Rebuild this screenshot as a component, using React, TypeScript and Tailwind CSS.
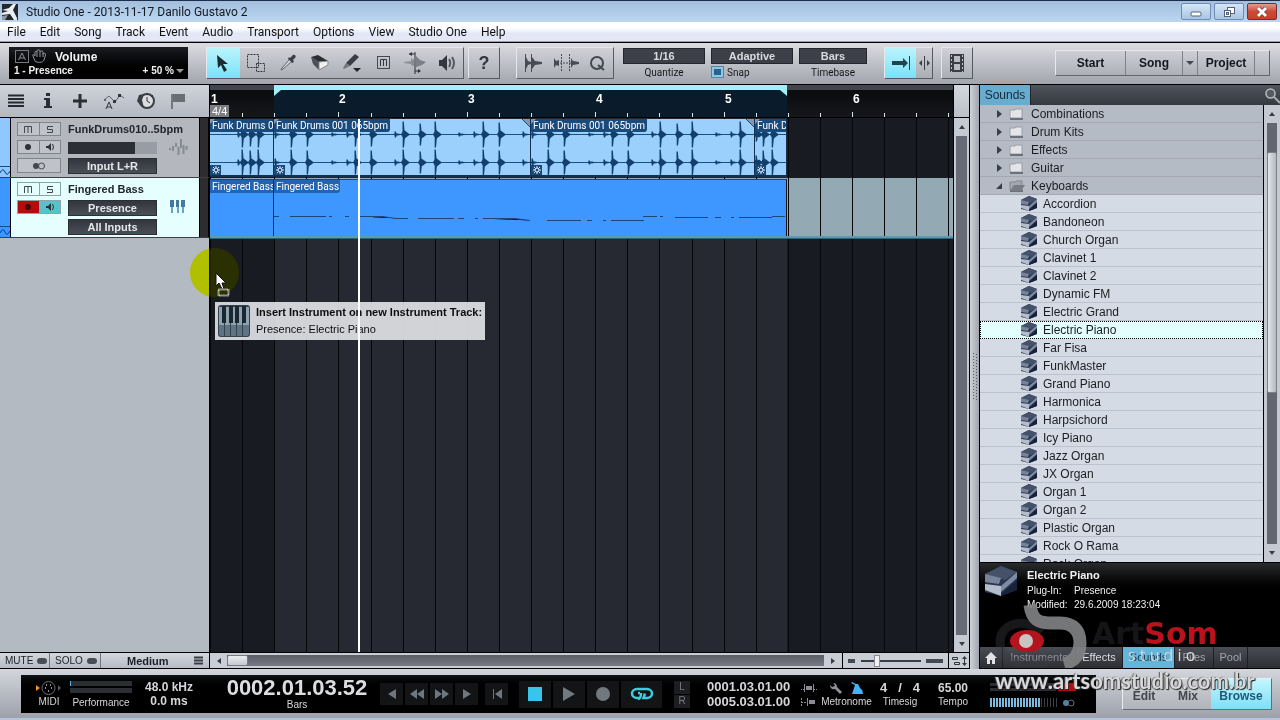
import { useState } from 'react';
import type { ReactNode } from 'react';

const MENUS = ['File', 'Edit', 'Song', 'Track', 'Event', 'Audio', 'Transport', 'Options', 'View', 'Studio One', 'Help'];

const FOLDERS = ['Combinations', 'Drum Kits', 'Effects', 'Guitar', 'Keyboards'];

const PRESETS = [
  'Accordion', 'Bandoneon', 'Church Organ', 'Clavinet 1', 'Clavinet 2', 'Dynamic FM', 'Electric Grand',
  'Electric Piano', 'Far Fisa', 'FunkMaster', 'Grand Piano', 'Harmonica', 'Harpsichord', 'Icy Piano',
  'Jazz Organ', 'JX Organ', 'Organ 1', 'Organ 2', 'Plastic Organ', 'Rock O Rama', 'Rock Organ',
];

const BAR_WIDTH = 128.4;
const BEATS = Array.from({ length: 24 }, (_, i) => ({ beat: i, x: Math.round((i * BAR_WIDTH) / 4) }));

// Hits inside an audio event: [x, size]
type Hit = [number, number];

const LOOP_HITS: Hit[] = [
  [1, 4], [17, 13], [33, 12], [58, 2], [73, 3], [81, 12], [97, 12], [121, 3], [129, 13], [146, 11], [161, 13],
  [185, 2], [200, 3], [209, 13], [225, 12], [249, 3],
];
const PICKUP_HITS: Hit[] = [[28, 3], [32, 13], [40, 12], [48, 13]];
const TAIL_HITS: Hit[] = [[1, 7], [8, 12], [17, 13]];

const AUDIO_EVENTS = [
  { id: 1, width: 'w-[64px]', label: 'Funk Drums 001 065bpm', hits: PICKUP_HITS },
  { id: 2, width: 'w-[257px]', label: 'Funk Drums 001 065bpm', hits: LOOP_HITS },
  { id: 3, width: 'w-[224px]', label: 'Funk Drums 001 065bpm', hits: LOOP_HITS },
  { id: 4, width: 'w-[32px]', label: 'Funk Drums 001', hits: TAIL_HITS },
];

function hitPath(hits: Hit[], cy: number) {
  return hits
    .map(([x, s]) => {
      const k = s > 6 ? 3 : 1;
      return `M${x - 2} ${cy}L${x - 0.5} ${cy - k}V${cy - s}H${x + 0.8}L${x + 1.5} ${cy - s / 3}L${x + 3} ${cy - k}L${x + 7} ${cy}L${x + 3} ${cy + k}L${x + 1.8} ${cy + s / 3}L${x + 1} ${cy + s}H${x - 0.3}V${cy + k}Z`;
    })
    .join('');
}

function Icon({ w = 20, h = 20, children }: { w?: number; h?: number; children: ReactNode }) {
  return (
    <svg width={w} height={h} viewBox={`0 0 ${w} ${h}`} fill="none" stroke="none" aria-hidden="true" className="shrink-0">
      {children}
    </svg>
  );
}

function TitleBar() {
  return (
    <header className="flex h-[22px] shrink-0 items-center border-t border-[#1d2f4d] bg-gradient-to-b from-[#a3bfdd] to-[#bcd6f1] pr-[3px] font-[Roboto,sans-serif] text-xs text-[#101820]">
      <span className="ml-[2px] mr-2">
        <Icon w={16} h={16}>
          <rect width="16" height="16" fill="#22272b" />
          <path d="M0 6L7 4L11 0H14L11 6L15 14V16H12L8 10L0 11V9L6 7Z" fill="#e9eef0" />
          <path d="M0 12L6 11L3 16H0Z" fill="#8d979c" />
        </Icon>
      </span>
      <h1 className="flex-1">Studio One - 2013-11-17 Danilo Gustavo 2</h1>
      <div className="flex gap-[3px]">
        <button aria-label="Minimize" className="flex h-[17px] w-[30px] items-center justify-center rounded-[2px] border border-[#6f8db3] bg-gradient-to-b from-[#d5e6f7] to-[#a9c5e3]">
          <Icon w={12} h={12}><rect x="1" y="6" width="10" height="4" rx="1" fill="#fff" stroke="#52637a" /></Icon>
        </button>
        <button aria-label="Restore" className="flex h-[17px] w-[30px] items-center justify-center rounded-[2px] border border-[#6f8db3] bg-gradient-to-b from-[#d5e6f7] to-[#a9c5e3]">
          <Icon w={12} h={12}>
            <rect x="4.500" y="1.500" width="7" height="6" fill="#fff" stroke="#52637a" />
            <rect x="1.500" y="4.500" width="6" height="6" fill="#fff" stroke="#52637a" />
            <rect x="3.500" y="6.500" width="2" height="2" fill="#a9c5e3" stroke="#52637a" />
          </Icon>
        </button>
        <button aria-label="Close" className="flex h-[17px] w-[30px] items-center justify-center rounded-[2px] border border-[#7e2a2a] bg-gradient-to-b from-[#e39a8e] via-[#cc4a36] to-[#c8402e]">
          <Icon w={12} h={12}>
            <path d="M2 2L10 10M10 2L2 10" stroke="#6d3030" strokeWidth="4" />
            <path d="M2 2L10 10M10 2L2 10" stroke="#fff" strokeWidth="3" />
          </Icon>
        </button>
      </div>
    </header>
  );
}

function MenuBar() {
  return (
    <nav className="flex h-[20px] shrink-0 items-center border-b border-[#9a9da5] bg-gradient-to-b from-white from-30% to-[#e4e8f6] to-60% pl-[7px] font-[Roboto,sans-serif] text-xs text-[#111]">
      {MENUS.map((menu) => (
        <button key={menu} className="mr-[14px] whitespace-nowrap">{menu}</button>
      ))}
    </nav>
  );
}

const GROUP = 'flex h-[32px] shrink-0 items-stretch border border-t-[#e6e7ea] border-l-[#e6e7ea] border-r-[#565a62] border-b-[#565a62] bg-gradient-to-b from-[#cfd1d6] to-[#abaeb6]';

function Tool({ label, active, className, children }: { label: string; active?: boolean; className: string; children: ReactNode }) {
  return (
    <button
      aria-label={label}
      className={`flex items-center justify-center ${className} ${active ? 'bg-gradient-to-b from-[#b9f4fd] to-[#78e2f8]' : ''}`}
    >
      {children}
    </button>
  );
}

function Picker({ id, label, value, width, children }: { id: string; label: string; value: string; width: string; children?: ReactNode }) {
  return (
    <div className={`flex shrink-0 flex-col ${width}`}>
      <select id={id} className="mt-[2px] h-[16px] w-full appearance-none border border-[#23262c] bg-[#3d4049] text-center text-[11px] leading-[14px] font-bold text-[#d8dade] [text-align-last:center]">
        <option>{value}</option>
      </select>
      <div className="mt-px flex h-[15px] items-center">
        {children}
        <label htmlFor={id} className={`font-[Roboto,sans-serif] text-[10px] text-[#15171b] ${children ? 'ml-1' : 'flex-1 text-center'}`}>{label}</label>
      </div>
    </div>
  );
}

function Toolbar() {
  return (
    <div className="flex h-[43px] shrink-0 items-center border-t border-b border-black bg-gradient-to-b from-[#dcdde2] to-[#a2a5ad] pb-[2px] pr-[10px] pl-[9px]">
      <div className="flex h-[32px] w-[179px] shrink-0 flex-col justify-center bg-gradient-to-b from-[#1b1d21] to-black pr-1 pl-[5px] text-[#f2f2f2]">
        <div className="flex items-center">
          <Icon w={34} h={16}>
            <rect x="1.500" y="1.500" width="13" height="12" stroke="#777b80" />
            <path d="M4.500 11L8 4L11.500 11M6 9H10" stroke="#8d9196" />
            <path d="M21 12L19 7C18 5 20 5 21 7V3C21 2 23 2 23 3V1.500C24 .5 26 .5 26 2V3C26 1.500 29 1.500 29 3V5C30 4 32 4 31.500 6L30 11C29 14 23 14 21 12ZM23 3V8M26 3V8M29 4V8" stroke="#8d9196" />
          </Icon>
          <span className="ml-[7px] text-xs leading-[16px] font-bold">Volume</span>
        </div>
        <div className="flex items-center justify-between text-[10px] leading-[12px] font-bold">
          <span>1 - Presence</span>
          <span className="flex items-center gap-[2px]">
            + 50 %
            <Icon w={8} h={6}><path d="M0 1H8L4 5Z" fill="#9b9b9b" /></Icon>
          </span>
        </div>
      </div>

      <div className={`${GROUP} ml-[18px] w-[258px]`}>
        <Tool label="Arrow tool" active className="w-[33px]">
          <Icon><path d="M4 2L15 11L10 11L14 17L11 19L8 12L5 15Z" fill="#1c2b30" /></Icon>
        </Tool>
        <Tool label="Range tool" className="w-[32px]">
          <Icon>
            <path d="M1.500 1.500H12.500V14.500H1.500Z" stroke="#30343a" strokeDasharray="2 1" />
            <path d="M10.500 10.500H18.500V18.500H10.500Z" stroke="#30343a" strokeDasharray="2 1" />
          </Icon>
        </Tool>
        <Tool label="Split tool" className="w-[32px]">
          <Icon>
            <path d="M12 5L14 3C16 0 19 3 17 5L15 7L16 9L14 10L10 6L11 4Z" fill="#3c4046" />
            <path d="M11 7L4 15L3 17L5 16L13 9" stroke="#5d6168" fill="#d9dbdf" />
          </Icon>
        </Tool>
        <Tool label="Eraser tool" className="w-[32px]">
          <Icon>
            <path d="M1 4L8 2L18 8L9 9Z" fill="#2a2d32" />
            <path d="M1 4L9 9V17L3 11Z" fill="#4b4e54" />
            <path d="M9 9L18 8V12L9 17Z" fill="#f0f0f2" stroke="#888" />
          </Icon>
        </Tool>
        <Tool label="Paint tool" className="w-[32px]">
          <Icon>
            <path d="M14 1L18 4L9 13L5 10Z" fill="#3a3d43" />
            <path d="M5 10L9 13L3 16L2 15Z" fill="#74777d" />
            <path d="M12 15H20L16 19Z" fill="#22252a" />
          </Icon>
        </Tool>
        <Tool label="Mute tool" className="w-[32px]">
          <Icon>
            <rect x="4.500" y="3.500" width="12" height="12" stroke="#444850" />
            <path d="M7.500 13V6.500H13.500V13M10.500 7V13" stroke="#33363c" />
          </Icon>
        </Tool>
        <Tool label="Bend tool" className="w-[32px]">
          <Icon w={24} h={24}>
            <path d="M1 11L8 10V7L11 9V15L8 14V13L1 12Z" fill="#8d9097" />
            <path d="M13 5L17 9L23 11L19 14L13 16Z" fill="#7c7f86" />
            <path d="M12 1V23M6 3H12M12 20H17" stroke="#2d3036" />
            <path d="M9 1V5L6 3ZM15 18V22L18 20Z" fill="#2d3036" />
          </Icon>
        </Tool>
        <Tool label="Listen tool" className="w-[32px]">
          <Icon>
            <path d="M2 7H5L10 2V18L5 13H2Z" fill="#33363c" />
            <path d="M12 6Q14.500 10 12 14M15 4Q19 10 15 16" stroke="#555960" strokeWidth="2" />
          </Icon>
        </Tool>
      </div>
      <div className={`${GROUP} ml-[4px] w-[32px]`}>
        <Tool label="Help" className="w-full text-lg font-bold text-[#33363c]">?</Tool>
      </div>
      <div className={`${GROUP} ml-[16px] w-[98px]`}>
        <Tool label="Transient detection" className="w-[32px]">
          <Icon>
            <path d="M2.500 1V19M8.500 1V19" stroke="#474b52" />
            <path d="M3 4L5 8L8 9V11L5 12L3 16ZM9 4L12 8L19 9V11L12 12L9 16Z" fill="#474b52" />
          </Icon>
        </Tool>
        <Tool label="Strip silence" className="w-[33px]">
          <Icon w={26} h={20}>
            <path d="M1 5L3 8L6 7V13L3 12L1 15ZM18 5L20 8L26 9V11L20 12L18 15Z" fill="#474b52" />
            <path d="M8.500 1V19M16.500 1V19M7 10H18" stroke="#474b52" strokeDasharray="2 1" />
          </Icon>
        </Tool>
        <Tool label="Quantize panel" className="flex-1">
          <Icon><circle cx="9" cy="10" r="6" stroke="#44484f" strokeWidth="2" /><path d="M10 12L16 17" stroke="#44484f" strokeWidth="2" /></Icon>
        </Tool>
      </div>

      <div className="ml-[9px] flex shrink-0 gap-[6px]">
        <Picker id="quantize" label="Quantize" value="1/16" width="w-[82px]" />
        <Picker id="snap-mode" label="Snap" value="Adaptive" width="w-[82px]">
          <input
            type="checkbox"
            aria-label="Snap enabled"
            defaultChecked
            className="ml-px h-[10px] w-[11px] appearance-none border-2 border-[#8ec6e4] bg-[#28648f] outline-1 outline-[#4f86ab]"
          />
        </Picker>
        <Picker id="timebase" label="Timebase" value="Bars" width="w-[68px]" />
      </div>

      <div className={`${GROUP} ml-[17px] w-[49px]`}>
        <Tool label="Autoscroll" active className="w-[31px]">
          <Icon>
            <path d="M1 8H12V5L17 10L12 15V12H1Z" fill="#24424d" />
            <path d="M18.500 3V17" stroke="#24424d" />
          </Icon>
        </Tool>
        <Tool label="Cursor follows edit" className="flex-1">
          <Icon w={12} h={14}><path d="M6.500 0V14" stroke="#3d4047" /><path d="M1 7L4 4V10ZM12 7L9 4V10Z" fill="#3d4047" /></Icon>
        </Tool>
      </div>
      <div className={`${GROUP} ml-[8px] w-[32px]`}>
        <Tool label="Video" className="w-full">
          <Icon>
            <rect x="3" y="1" width="14" height="18" fill="#3a3d43" />
            <path d="M7 3H13V9H7ZM7 11H13V17H7Z" fill="#b9bcc3" />
            <path d="M4.500 2V19M15.500 2V19" stroke="#c3c5cb" strokeDasharray="2 2" />
          </Icon>
        </Tool>
      </div>

      <div className="ml-auto flex h-[26px] w-[215px] shrink-0 items-stretch divide-x divide-[#7e8189] border border-t-[#e9e9ec] border-l-[#e9e9ec] border-r-[#63666e] border-b-[#63666e] bg-gradient-to-b from-[#cdcfd4] to-[#adb0b8] text-xs font-bold text-[#15171b]">
        <button className="w-[70px]">Start</button>
        <button className="w-[57px]">Song</button>
        <button aria-label="Recent songs" className="flex w-[15px] items-center justify-center">
          <Icon w={8} h={6}><path d="M0 1H8L4 5Z" fill="#44474d" /></Icon>
        </button>
        <button className="w-[57px]">Project</button>
        <button aria-label="Recent projects" className="flex-1" />
      </div>
    </div>
  );
}

function TrackTools() {
  return (
    <div className="flex h-[33px] shrink-0 items-center border-b border-black bg-gradient-to-b from-[#d0d3da] to-[#b4b8c2]">
      <button aria-label="Track list" className="flex w-[32px] justify-center">
        <Icon><path d="M2 4.500H18M2 8H18M2 11.500H18M2 15H18" stroke="#26292e" strokeWidth="2" /></Icon>
      </button>
      <button aria-label="Inspector" className="flex w-[32px] justify-center">
        <Icon><path d="M8 2H12V5H8ZM6 7H12V15H14V17H6V15H8V9H6Z" fill="#2b2e34" /></Icon>
      </button>
      <button aria-label="Add track" className="flex w-[31px] justify-center">
        <Icon><path d="M10 3V17M3 10H17" stroke="#2b2e34" strokeWidth="3" /></Icon>
      </button>
      <button aria-label="Automation" className="flex w-[38px] justify-center">
        <Icon w={24} h={20}>
          <path d="M2 9L7 5L13 11L18 4L22 7" stroke="#5f636a" />
          <path d="M4 18L7 11L10 18M5 16H9" stroke="#33363c" />
          <rect x="11" y="9" width="3" height="3" fill="#33363c" /><rect x="16" y="3" width="3" height="3" fill="#33363c" />
          <rect x="2" y="8" width="2" height="2" fill="#5f636a" />
        </Icon>
      </button>
      <button aria-label="Tempo track" className="flex w-[26px] justify-center">
        <Icon>
          <circle cx="11" cy="10" r="7" fill="#dcdde1" stroke="#3c3f45" strokeWidth="2" />
          <path d="M3 4L8 3L6 9L8 17L4 14L1 10Z" fill="#3a3d43" />
          <path d="M11 2V4M11 10V6M11 10L14 12M15 6L17 4" stroke="#2b2e34" />
        </Icon>
      </button>
      <button aria-label="Markers" className="flex w-[38px] justify-center">
        <Icon><path d="M3 3H5V18H3Z" fill="#74777d" /><path d="M5 3H17V11H5Z" fill="#6a6d73" /></Icon>
      </button>
    </div>
  );
}

function WaveGlyph({ color }: { color: string }) {
  return <Icon w={10} h={10}><path d="M0 6Q3 0 5 5T10 4" stroke={color} /></Icon>;
}

const MINI = 'flex flex-1 items-center justify-center';

function TrackHeader({ kind }: { kind: 'audio' | 'instrument' }) {
  const audio = kind === 'audio';
  const line = audio ? 'border-[#80848c] divide-[#80848c] bg-[#bfc2c9]' : 'border-[#8ba4a8] divide-[#8ba4a8]';
  return (
    <li className="flex h-[60px] border-b border-[#3b3e44]">
      <div className={`flex w-[11px] flex-col justify-end border-r border-black ${audio ? 'bg-[#8fc8ff]' : 'bg-[#3d97ff]'}`}>
        <div className="border-t border-[#174a80]"><WaveGlyph color="#0c3c78" /></div>
      </div>
      <div className={`flex w-[188px] gap-[7px] pt-[4px] pl-[6px] ${audio ? 'bg-[#b4b7be]' : 'bg-[#e4fffe]'}`}>
        <div className="flex w-[44px] flex-col gap-[4px] text-[#3c3f45]">
          <div className={`flex h-[14px] divide-x border ${line}`}>
            <button aria-label="Mute" className={MINI}><Icon w={10} h={10}><path d="M1.500 9V2.500H8.500V9M5 3V9" stroke="#44474d" /></Icon></button>
            <button aria-label="Solo" className={MINI}><Icon w={10} h={10}><path d="M8 2.500H2.500V5.500H7.500V8.500H2" stroke="#44474d" /></Icon></button>
          </div>
          <div className={`flex h-[14px] divide-x border ${line}`}>
            <button aria-label="Record" className={`${MINI} ${audio ? '' : 'bg-[#b60a0c]'}`}>
              <Icon w={8} h={8}><circle cx="4" cy="4" r="3" fill={audio ? '#2e3136' : '#4c0507'} /></Icon>
            </button>
            <button aria-label="Monitor" className={`${MINI} ${audio ? '' : 'bg-[#55c3c9]'}`}>
              <Icon w={10} h={10}><path d="M1 4H3L6 1V9L3 6H1Z" fill="#2e3136" /><path d="M7.500 2Q9.500 5 7.500 8" stroke="#2e3136" /></Icon>
            </button>
          </div>
          {audio && (
            <button aria-label="Stereo" className={`flex h-[15px] items-center justify-center border ${line}`}>
              <Icon w={14} h={10}><circle cx="4" cy="5" r="3" fill="#44474d" /><circle cx="9.500" cy="5" r="3" stroke="#44474d" /></Icon>
            </button>
          )}
        </div>
        <div className="flex w-[89px] flex-col">
          <span className="h-[14px] text-[11px] leading-[14px] font-bold whitespace-nowrap text-[#22252b]">
            {audio ? 'FunkDrums010..5bpm' : 'Fingered Bass'}
          </span>
          {audio ? (
            <input
              type="range"
              aria-label="Volume"
              defaultValue={75}
              className="mt-[6px] h-[12px] w-full appearance-none bg-[linear-gradient(90deg,#2c2f36_75%,#989ca4_75%)] [&::-webkit-slider-thumb]:h-[12px] [&::-webkit-slider-thumb]:w-px [&::-webkit-slider-thumb]:appearance-none"
            />
          ) : (
            <button className="mt-[4px] h-[16px] border border-[#2b2e33] bg-gradient-to-b from-[#33363e] to-[#4a4e57] text-[11px] leading-[14px] font-bold text-[#e4e6e9]">Presence</button>
          )}
          <button className={`h-[16px] border border-[#2b2e33] bg-gradient-to-b from-[#33363e] to-[#4a4e57] text-[11px] leading-[14px] font-bold text-[#e4e6e9] ${audio ? 'mt-[4px]' : 'mt-[3px]'}`}>
            {audio ? 'Input L+R' : 'All Inputs'}
          </button>
        </div>
        <div className="ml-[5px] self-center pb-1">
          {audio ? (
            <Icon><path d="M1 10V12M4 8V13M7 5V9M9.500 9V17M12 1V10M14.500 7V16M17.500 8V12" stroke="#868a91" strokeWidth="2" /></Icon>
          ) : (
            <Icon>
              <path d="M1 2H5V9H1ZM7 2H10V9H7ZM12 2H16V9H12Z" fill="#45789a" />
              <path d="M2 9H4V15H2ZM8 9H10V15H8ZM13 9H15V15H13Z" fill="#6ca3c2" />
            </Icon>
          )}
        </div>
      </div>
      <div className="flex-1 border-x border-black bg-[#2d2c2e]" />
    </li>
  );
}

function TrackColumn() {
  return (
    <section className="flex w-[210px] shrink-0 flex-col border-r border-black bg-[#b4bac2]">
      <TrackTools />
      <ul>
        <TrackHeader kind="audio" />
        <TrackHeader kind="instrument" />
      </ul>
      <div className="mt-auto flex h-[17px] items-center divide-x divide-[#70747c] border-y border-black bg-gradient-to-b from-[#d3d7de] to-[#b7bbc5] text-[10px] text-[#1c1f24]">
        <button className="flex w-[50px] items-center gap-1 pl-[5px]">MUTE <span className="h-[6px] w-[10px] rounded-sm bg-[#494d54]" /></button>
        <button className="flex w-[51px] items-center gap-1 pl-[5px]">SOLO <span className="h-[6px] w-[10px] rounded-sm bg-[#494d54]" /></button>
        <button className="flex flex-1 items-center justify-between pr-[6px] pl-[26px] text-[11px] leading-[14px] font-bold">
          Medium
          <Icon w={9} h={9}><path d="M0 1.500H9M0 4.500H9M0 7.500H9" stroke="#3a3d43" strokeWidth="2" /></Icon>
        </button>
      </div>
    </section>
  );
}

function Ruler() {
  return (
    <div className="relative h-[33px] shrink-0 overflow-hidden border-b border-black bg-gradient-to-b from-[#08090b] to-[#15171b]">
      <div className="h-[5px] bg-[#42454d]" />
      <div className="absolute inset-y-0 left-[64px] w-[513px] border-t-[5px] border-[#9ff0fb] bg-[#0a1b2b]">
        <div className="flex justify-between">
          <Icon w={7} h={6}><path d="M0 0H7L0 6Z" fill="#9ff0fb" /></Icon>
          <Icon w={7} h={6}><path d="M0 0H7V6Z" fill="#9ff0fb" /></Icon>
        </div>
      </div>
      {BEATS.map(({ beat, x }) => (
        <div key={beat} className="absolute inset-y-0 flex flex-col justify-between" style={{ left: x }}>
          <span className="pt-[7px] pl-[1px] text-xs leading-[14px] font-bold text-white">{beat % 4 === 0 ? beat / 4 + 1 : ''}</span>
          <span className={`w-px bg-[#dfe6ea] ${beat % 4 === 0 ? 'h-[5px]' : 'h-[4px]'}`} />
        </div>
      ))}
      <span className="absolute bottom-0 left-0 bg-[#7c7e83] px-[2px] text-[11px] leading-[12px] text-white">4/4</span>
    </div>
  );
}

const CLIP_LABEL = 'h-[13px] px-[2px] font-[Roboto,sans-serif] text-[10px] leading-[13px] whitespace-nowrap text-white';

function AudioClip({ width, label, hits }: { width: string; label: string; hits: Hit[] }) {
  return (
    <div className={`relative h-[58px] shrink-0 overflow-hidden border-r border-b-2 border-[#14304e] bg-[#9bd0fd] ${width}`}>
      <svg width="257" height="56" className="absolute top-0 left-0" aria-hidden="true">
        <path d="M0 15.500H257M0 43.500H257" stroke="#1c4f80" />
        <path d={hitPath(hits, 15.5)} fill="#123f6b" />
        <path d={hitPath(hits, 43.5)} fill="#123f6b" />
      </svg>
      <svg width="8" height="8" className="absolute top-0 right-0" aria-hidden="true"><path d="M0 0H8V8Z" fill="#8296b8" /><path d="M0 0L8 8" stroke="#24466f" /></svg>
      <div className="relative flex h-full flex-col items-start justify-between">
        <span className={`${CLIP_LABEL} rounded-br-[3px] bg-[#194a7e]`}>{label}</span>
        <span className="flex h-[10px] w-[11px] items-center justify-center bg-[#194a7e]">
          <Icon w={8} h={8}><circle cx="4" cy="4" r="2" stroke="#fff" /><path d="M4 0V2M4 6V8M0 4H2M6 4H8M1 1L2 2M6 6L7 7M7 1L6 2M2 6L1 7" stroke="#dcecff" /></Icon>
        </span>
      </div>
      <svg width="6" height="6" className="absolute top-0 left-0" aria-hidden="true"><path d="M0 0H5L0 5Z" fill="#8296b8" /></svg>
    </div>
  );
}

function Lanes() {
  return (
    <div className="relative flex-1 overflow-hidden bg-[#181b22]">
      <div className="absolute inset-y-0 left-[64px] w-[513px] bg-[#262931]" />
      {/* selected track lane */}
      <div className="absolute inset-x-0 top-[60px] h-[60px] bg-[#93aab4]" />
      {BEATS.map(({ beat, x }) => (
        <div key={beat} className="absolute inset-y-0 w-px bg-[#060709]" style={{ left: x }} />
      ))}
      <div className="relative flex h-[60px] pt-[1px]">
        {AUDIO_EVENTS.map((event) => (
          <AudioClip key={event.id} width={event.width} label={event.label} hits={event.hits} />
        ))}
      </div>
      <div className="relative flex h-[58px] pt-px">
        <div className="w-[64px] shrink-0 overflow-hidden border-t border-r border-t-[#15488a] border-r-[#0f2f58] bg-[#3d97ff]">
          <span className={`${CLIP_LABEL} block bg-[#2263b3]`}>Fingered Bass</span>
        </div>
        <div className="w-[513px] shrink-0 border-t border-r border-t-[#15488a] border-r-[#0b1118] bg-[#3d97ff]">
          <span className={`${CLIP_LABEL} block w-[66px] rounded-br-[3px] bg-[#2263b3]`}>Fingered Bass</span>
          <svg width="511" height="14" className="mt-[19px]" aria-hidden="true">
            <path
              d="M0 4.500H5M16 4.500H52M55 4.500H58M71 4.500H75M86 4.500H108L122 6.500H134M144 6.500H180M184 6.500H190M201 6.500H204M209 6.500H240L256 8.500M273 8.500H307M313 8.500H318M329 8.500H332M337 8.500H370M369 4.500H383M386 4.500H389M401 5.500H434M441 5.500H447M457 5.500H460M465 5.500H497L499 4.500H511"
              stroke="#1f4775"
            />
          </svg>
        </div>
      </div>
      <div className="relative h-[3px] border-b border-[#2f6278] bg-[#5a9ab5]" />
    </div>
  );
}

function Arrow({ d }: { d: string }) {
  return <Icon w={8} h={8}><path d={d} fill="#3a3d43" /></Icon>;
}

function Arrangement() {
  const [zoom, setZoom] = useState(25);
  return (
    <section className="flex min-w-0 flex-1 flex-col">
      <div className="flex min-h-0 flex-1">
        <div className="relative flex min-w-0 flex-1 flex-col">
          <Ruler />
          <Lanes />
        </div>
        <div className="flex w-[17px] shrink-0 flex-col border-x border-black bg-[#c5c9d2]">
          <div className="h-[33px] border-b border-black bg-gradient-to-b from-[#d4d7dd] to-[#bcc0ca]" />
          <div className="flex h-[18px] items-center justify-center"><Arrow d="M1 6H7L4 2Z" /></div>
          <div className="mx-[2px] flex-1 bg-[#686b75]" />
          <div className="flex h-[17px] items-center justify-center"><Arrow d="M1 2H7L4 6Z" /></div>
        </div>
      </div>
      <div className="flex h-[17px] shrink-0 border-y border-black bg-[#c9cdd5]">
        <div className="flex min-w-0 flex-1 items-center">
          <span className="flex w-[17px] justify-center"><Arrow d="M6 1V7L2 4Z" /></span>
          <div className="h-[11px] flex-1 bg-gradient-to-b from-[#5b5e68] to-[#777a83]">
            <div className="h-full w-[21px] rounded-[2px] border border-[#777b84] bg-gradient-to-b from-[#eceef1] to-[#c5c8cf]" />
          </div>
          <span className="flex w-[18px] justify-center"><Arrow d="M2 1V7L6 4Z" /></span>
        </div>
        <div className="flex w-[106px] items-center justify-between border-l border-black px-[5px]">
          <span className="h-[4px] w-[7px] bg-[#454950]" />
          <input
            type="range"
            aria-label="Horizontal zoom"
            value={zoom}
            onChange={(e) => setZoom(Number(e.target.value))}
            className="h-[12px] w-[60px] appearance-none bg-[linear-gradient(0deg,transparent_5px,#3a3d43_5px,#3a3d43_7px,transparent_7px)] [&::-webkit-slider-thumb]:h-[12px] [&::-webkit-slider-thumb]:w-[6px] [&::-webkit-slider-thumb]:appearance-none [&::-webkit-slider-thumb]:border [&::-webkit-slider-thumb]:border-[#8a8d94] [&::-webkit-slider-thumb]:bg-[#eff0f2]"
          />
          <span className="h-[4px] w-[17px] bg-[#454950]" />
        </div>
        <button aria-label="Track heights" className="flex w-[22px] items-center justify-center border-x border-black">
          <Icon w={16} h={12}><path d="M1.500 2.500H6.500V4.500H1.500ZM3.500 7.500H8.500V9.500H3.500ZM13.500 2V10" stroke="#33363c" /><path d="M11 4L13.500 1L16 4ZM11 8L13.500 11L16 8Z" fill="#33363c" /></Icon>
        </button>
      </div>
    </section>
  );
}

function FolderRow({ name, open }: { name: string; open: boolean }) {
  return (
    <li className="h-[18px] border-b border-[#a3a8b2] bg-[#b5bbc4]">
      <button className="flex h-full w-full items-center pl-[15px] text-left">
        <Icon w={8} h={10}>{open ? <path d="M7 2V8H1Z" fill="#3a3e46" /> : <path d="M2 1V9L7 5Z" fill="#3a3e46" />}</Icon>
        <span className="mx-[6px]">
          <Icon w={16} h={14}>
            <path d="M1 3H6L7 2H13V11H1Z" fill={open ? '#a3a8b0' : '#e3e5e8'} stroke={open ? '#83878f' : '#9a9ea6'} />
            <path d="M1 12H14" stroke="#6c7078" strokeWidth="2" />
            {open && <path d="M5 6H16L12 12H1Z" fill="#777c85" />}
          </Icon>
        </span>
        {name}
      </button>
    </li>
  );
}

function PresetIcon({ size }: { size: number }) {
  return (
    <svg width={size} height={size} viewBox="0 0 16 16" className="shrink-0" aria-hidden="true">
      <path d="M8 0L16 3V12L8 15L0 13V4Z" fill="#2a3650" />
      <path d="M8 0L16 3L10 7L0 4Z" fill="#445169" />
      <path d="M0 4L8 6L7 9L0 8Z" fill="#76839a" />
      <path d="M0 9L8 10V15L0 12Z" fill="#b4bdcb" />
      <path d="M16 3L8 10V13L16 6Z" fill="#7c8aa2" />
      <path d="M16 7V12L8 15V14Z" fill="#18213a" />
    </svg>
  );
}

function Browser() {
  const [selected, setSelected] = useState('Electric Piano');
  return (
    <aside className="flex w-[301px] shrink-0 flex-col border-l border-black bg-[#b5bbc4]">
      <div className="flex h-[20px] shrink-0 items-center justify-between bg-gradient-to-b from-[#50545d] to-[#34383f]">
        <button className="h-full w-[51px] border-r border-[#222] bg-[#68add0] text-xs text-[#122a3c]">Sounds</button>
        <button aria-label="Search" className="flex">
          <Icon w={16} h={18}><circle cx="6.500" cy="7.500" r="4.500" fill="#565a61" stroke="#b8bbc0" strokeWidth="1.500" /><path d="M10 11L16 17" stroke="#a9acb2" strokeWidth="2" /></Icon>
        </button>
      </div>
      <div className="flex min-h-0 flex-1">
        <ul className="flex-1 overflow-hidden text-xs text-[#1a1d22]">
          {FOLDERS.map((name) => (
            <FolderRow key={name} name={name} open={name === 'Keyboards'} />
          ))}
          {PRESETS.map((name) => (
            <li key={name} className={`h-[18px] ${name === selected ? 'border border-dotted border-black bg-[#e2fffe]' : 'border-b border-[#bcc2cb] bg-[#d5dbe4]'}`}>
              <button onClick={() => setSelected(name)} className={`flex h-full w-full items-center gap-[6px] text-left ${name === selected ? 'pl-[40px]' : 'pl-[41px]'}`}>
                <PresetIcon size={16} />
                {name}
              </button>
            </li>
          ))}
        </ul>
        <div className="flex w-[17px] flex-col border-l border-black bg-[#c5c9d2]">
          <div className="flex h-[18px] items-center justify-center"><Arrow d="M1 6H7L4 2Z" /></div>
          <div className="mx-[3px] flex min-h-0 flex-1 flex-col bg-[#646772]">
            <div className="mt-[29px] h-[241px] rounded-[2px] border border-[#7d8089] bg-gradient-to-r from-[#e3e5e9] to-[#b3b7c0]" />
          </div>
          <div className="flex h-[18px] items-center justify-center"><Arrow d="M1 2H7L4 6Z" /></div>
        </div>
      </div>
      <div className="flex h-[84px] shrink-0 gap-[10px] border-t border-black bg-gradient-to-b from-[#2a2b2e] to-black to-40% pt-[3px] pl-[5px] text-[11px] leading-[14px] text-[#f0f0f0]">
        <PresetIcon size={32} />
        <div className="pt-[2px]">
          <h2 className="mb-[2px] font-bold">Electric Piano</h2>
          <dl className="grid grid-cols-[47px_auto] text-[10px]">
            <dt>Plug-In:</dt>
            <dd>Presence</dd>
            <dt>Modified:</dt>
            <dd>29.6.2009 18:23:04</dd>
          </dl>
        </div>
      </div>
      <div className="flex h-[23px] shrink-0 divide-x divide-[#1d1f23] border-y border-black bg-gradient-to-b from-[#4a4d54] to-[#2d2f34] text-[11px] text-[#dcdde0]">
        <button aria-label="Home" className="flex w-[23px] items-center justify-center">
          <Icon w={12} h={12}><path d="M6 0L12 6H10V12H7V8H5V12H2V6H0Z" fill="#dfe1e4" /></Icon>
        </button>
        <button className="w-[73px] text-[#8d8f94]">Instruments</button>
        <button className="w-[47px]">Effects</button>
        <button className="w-[52px] bg-[#64b5da] text-[#16384c]">Sounds</button>
        <button className="w-[39px] text-[#a2a4a8]">Files</button>
        <button className="w-[34px] text-[#a2a4a8]">Pool</button>
        <span className="flex-1" />
      </div>
    </aside>
  );
}

function TransportButton({ label, className, children }: { label: string; className: string; children: ReactNode }) {
  return (
    <button aria-label={label} className={`flex shrink-0 items-center justify-center bg-[#121416] ${className}`}>
      {children}
    </button>
  );
}

function TransportBar() {
  return (
    <footer className="flex h-[51px] shrink-0 border-b-2 border-[#b5c4de] bg-gradient-to-b from-[#d3d6dc] to-[#9da1aa] pt-[6px] pr-[8px] pl-[21px]">
      <div className="flex h-[38px] min-w-0 flex-1 items-center bg-gradient-to-b from-[#111316] to-black to-40% text-[10px] leading-[12px] text-[#d5d6d8]">
        <div className="flex w-[49px] shrink-0 flex-col items-center pl-[7px]">
          <Icon w={26} h={16}>
            <path d="M0 5V11L4 8Z" fill="#f08a24" />
            <circle cx="12.500" cy="8" r="6.500" stroke="#6a6d72" />
            <path d="M9 8H10M15 8H16M12 11H13M10 5H11M14 5H15" stroke="#8b8e93" strokeWidth="2" />
            <path d="M22 5V11L25 8Z" fill="#55585e" />
          </Icon>
          <span>MIDI</span>
        </div>
        <div className="flex w-[62px] shrink-0 flex-col items-center gap-[2px] pt-[2px]">
          <span className="h-[5px] w-full border-l border-[#57b2e6] bg-[#2b2e33]" />
          <span className="h-[5px] w-full bg-[#2b2e33]" />
          <span className="pt-[2px]">Performance</span>
        </div>
        <div className="w-[74px] shrink-0 text-center text-xs leading-[14px] font-bold">
          <p>48.0 kHz</p>
          <p>0.0 ms</p>
        </div>
        <div className="w-[182px] shrink-0 text-center">
          <p className="text-[22px] leading-[22px] font-bold text-[#dcdddf]">0002.01.03.52</p>
          <p>Bars</p>
        </div>
        <div className="-ml-[8px] flex shrink-0 gap-[2px]">
          <TransportButton label="Previous marker" className="h-[22px] w-[23px]"><Icon w={16} h={12}><path d="M12 1V11L4 6Z" fill="#6c7780" /></Icon></TransportButton>
          <TransportButton label="Rewind" className="h-[22px] w-[23px]"><Icon w={16} h={12}><path d="M8 1V11L1 6ZM15 1V11L8 6Z" fill="#6c7780" /></Icon></TransportButton>
          <TransportButton label="Forward" className="h-[22px] w-[23px]"><Icon w={16} h={12}><path d="M1 1V11L8 6ZM8 1V11L15 6Z" fill="#6c7780" /></Icon></TransportButton>
          <TransportButton label="Next marker" className="h-[22px] w-[23px]"><Icon w={16} h={12}><path d="M4 1V11L12 6Z" fill="#6c7780" /></Icon></TransportButton>
        </div>
        <div className="ml-[7px] flex shrink-0">
          <TransportButton label="Return to zero" className="h-[22px] w-[23px]"><Icon w={12} h={12}><path d="M2.500 1V11" stroke="#6c7780" /><path d="M11 1V11L4 6Z" fill="#6c7780" /></Icon></TransportButton>
        </div>
        <div className="ml-[11px] flex shrink-0 gap-[2px]">
          <TransportButton label="Stop" className="h-[27px] w-[32px]"><Icon w={14} h={14}><rect width="14" height="14" fill="#38c5ea" /></Icon></TransportButton>
          <TransportButton label="Start" className="h-[27px] w-[32px]"><Icon w={14} h={14}><path d="M1 0V14L13 7Z" fill="#71797f" /></Icon></TransportButton>
          <TransportButton label="Record" className="h-[27px] w-[32px]"><Icon w={14} h={14}><circle cx="7" cy="7" r="7" fill="#71797f" /></Icon></TransportButton>
          <TransportButton label="Loop" className="h-[27px] w-[41px]">
            <Icon w={24} h={14}>
              <path d="M10 6H8M9 11H7A5 4.500 0 0 1 7 2H17A5 4.500 0 0 1 17 11H13.500L15 6.500M8 12C10 12 11 10 11 6" stroke="#3fcbe0" strokeWidth="2.500" />
            </Icon>
          </TransportButton>
        </div>
        <div className="ml-[12px] flex w-[16px] shrink-0 flex-col gap-px text-center text-[#767a80]">
          <button className="h-[13px] bg-[#1c1e22]">L</button>
          <button className="h-[13px] bg-[#1c1e22]">R</button>
        </div>
        <div className="ml-[17px] w-[85px] shrink-0 text-[13px] leading-[15px] font-bold">
          <p>0001.03.01.00</p>
          <p>0005.03.01.00</p>
        </div>
        <div className="ml-[8px] flex w-[18px] shrink-0 flex-col gap-[3px]">
          <Icon w={18} h={12}><path d="M1 8.500H4M14 8.500H17" stroke="#898c91" strokeDasharray="1 1" /><path d="M4.500 3V11M13.500 3V11" stroke="#898c91" /><path d="M6 5H12V9H6Z" fill="#898c91" /></Icon>
          <Icon w={18} h={12}><path d="M1.500 2V10M1 6.500H7" stroke="#898c91" strokeDasharray="2 1" /><path d="M7.500 2V10" stroke="#898c91" /><path d="M9 4H15V8H9Z" fill="#898c91" /></Icon>
        </div>
        <div className="ml-[3px] flex w-[51px] shrink-0 flex-col items-center">
          <div className="flex gap-[7px]">
            <Icon w={14} h={16}><path d="M4 3C7 3 8 5 8 7L13 12L11 14L6 9C3 10 1 8 1 5L3 7L6 6L5 4Z" fill="#8e9196" /></Icon>
            <Icon w={14} h={16}><path d="M2 14L5 5L1 3L2 2L6 4H8L10 8L12 10V9L13 14Z" fill="#43b5f2" /></Icon>
          </div>
          <span>Metronome</span>
        </div>
        <div className="ml-[5px] w-[46px] shrink-0 text-center">
          <p className="flex justify-between px-[3px] text-[13px] leading-[16px] font-bold"><span>4</span><span>/</span><span>4</span></p>
          <p>Timesig</p>
        </div>
        <div className="ml-[9px] w-[42px] shrink-0 text-center">
          <p className="text-xs leading-[16px] font-bold">65.00</p>
          <p>Tempo</p>
        </div>
        <div className="ml-auto flex w-[78px] shrink-0 flex-col gap-[6px] pt-px">
          <div className="flex h-[10px] w-[86px] items-center gap-[2px]">
            <span className="h-[8px] w-[66px] bg-[repeating-linear-gradient(0deg,#2b2d31_0px,#2b2d31_3px,#000_3px,#000_5px)]" />
            <span className="h-[8px] w-[18px] bg-[#b50e12]" />
          </div>
          <div className="flex items-center gap-[4px]">
            <Icon w={68} h={9}>
              <path d="M0 4.500H50" stroke="#7db9dc" strokeWidth="9" strokeDasharray="2 1" />
              <path d="M51 4.500H68" stroke="#3d4147" strokeWidth="9" strokeDasharray="1 2" />
            </Icon>
            <Icon w={14} h={8}><circle cx="4" cy="4" r="3" fill="#4e86a5" /><circle cx="9" cy="4" r="3" stroke="#5d6d78" /></Icon>
          </div>
        </div>
        <span className="w-[28px] shrink-0" />
      </div>
      <div className="ml-[26px] mt-[3px] flex h-[32px] w-[150px] shrink-0 border border-t-[#eceded] border-l-[#eceded] border-r-[#696c73] border-b-[#696c73] bg-gradient-to-b from-[#cfd1d6] to-[#b0b3ba] text-xs font-bold text-[#42454c]">
        <button className="w-[42px] pt-[3px]">Edit</button>
        <button className="flex-1 pt-[3px]">Mix</button>
        <button className="w-[60px] bg-gradient-to-b from-[#c2f6fe] to-[#7ddff6] pt-[3px] text-[#1c5a78]">Browse</button>
      </div>
    </footer>
  );
}

function Watermark() {
  return (
    <div className="pointer-events-none absolute right-[20px] bottom-[26px] flex w-[270px] flex-col items-center">
      <div className="flex w-full items-start gap-[4px] pl-[4px]">
        <svg width="94" height="64" viewBox="0 0 94 64" fill="none" className="shrink-0" aria-hidden="true">
          <path d="M56 56C40 66 6 62 6 38C6 20 30 12 48 28" stroke="#3c3d40" strokeOpacity="0.400" strokeWidth="9" />
          <ellipse cx="33" cy="37" rx="17" ry="11" fill="#b5141e" />
          <circle cx="32" cy="37" r="7" fill="#c9c4c2" />
          <path d="M36 1C38 16 44 19 58 19H66C80 19 86 27 86 39C86 50 81 57 70 60" stroke="#828385" strokeOpacity="0.900" strokeWidth="13" />
        </svg>
        <div className="flex flex-col pt-[14px]">
          <p className="font-[DejaVu_Sans,sans-serif] text-[30px] leading-[32px] font-bold">
            <span className="text-[#151517]">Art</span>
            <span className="text-[#b8131d]">Som</span>
          </p>
          <p className="-mt-[3px] pl-[36px] font-[Open_Sans,sans-serif] text-base leading-[16px] whitespace-pre text-[#d6d7d9]">s t u d i o</p>
        </div>
      </div>
      <p className="font-[Lato,sans-serif] text-[22px] leading-[26px] font-bold text-[#d6d8da] [text-shadow:1px_1px_1px_#222,-1px_0_1px_#555]">www.artsomstudio.com.br</p>
    </div>
  );
}

export default function App() {
  return (
    <div className="relative flex h-screen flex-col overflow-hidden bg-[#b4bac2] font-[Liberation_Sans,Arial,sans-serif]">
      <TitleBar />
      <MenuBar />
      <Toolbar />
      <main className="relative flex min-h-0 flex-1">
        <TrackColumn />
        <Arrangement />
        <div className="flex w-[9px] shrink-0 items-center justify-center bg-gradient-to-r from-[#cfd2d8] to-[#9fa4ae]">
          <svg width="6" height="48" aria-hidden="true">
            <path d="M1.500 0V48M4.500 1V48" stroke="#555962" strokeDasharray="1 2" />
          </svg>
        </div>
        <Browser />

        {/* drag and drop feedback */}
        <div className="absolute top-[163px] left-[190px] h-[49px] w-[49px] rounded-full bg-[#f4ff00] mix-blend-multiply" />
        <div className="absolute top-[163px] left-[190px] h-[49px] w-[49px] rounded-full bg-[#d8f000]/10" />
        <div className="absolute top-[217px] left-[215px] flex h-[38px] w-[270px] items-center gap-[6px] bg-[#e4e5ea]/90 pl-[3px] text-[#0c0d0f]">
          <Icon w={32} h={32}>
            <rect width="32" height="32" rx="3" fill="#34424d" />
            <path d="M1 2H6V31H3L1 29ZM7 2H12V31H7ZM13 2H18V31H13ZM19 2H24V31H19ZM25 2H31V29L29 31H25Z" fill="#8fa2af" />
            <path d="M1 20H6V31H3L1 29ZM7 20H12V31H7ZM13 20H18V31H13ZM19 20H24V31H19ZM25 20H31V29L29 31H25Z" fill="#5f7482" />
            <path d="M4 1H8V18H4ZM11 1H15V18H11ZM17 1H21V18H17ZM24 1H28V18H24Z" fill="#1b2730" />
          </Icon>
          <div className="whitespace-nowrap">
            <p className="text-[11px] leading-[17px] font-bold">Insert Instrument on new Instrument Track:</p>
            <p className="text-[11px] leading-[17px]">Presence: Electric Piano</p>
          </div>
        </div>
        <div className="absolute top-[34px] bottom-[17px] left-[358px] w-[2px] bg-white" />
        <svg width="16" height="26" className="absolute top-[187px] left-[215px]" aria-hidden="true">
          <path d="M1 1V14L4 11L7 17H9L7 11H11Z" fill="#fff" stroke="#111" />
          <rect x="3.500" y="17.500" width="10" height="6" fill="none" stroke="#fff" strokeDasharray="1 1" strokeWidth="2" />
        </svg>
      </main>
      <TransportBar />
      <Watermark />
    </div>
  );
}
